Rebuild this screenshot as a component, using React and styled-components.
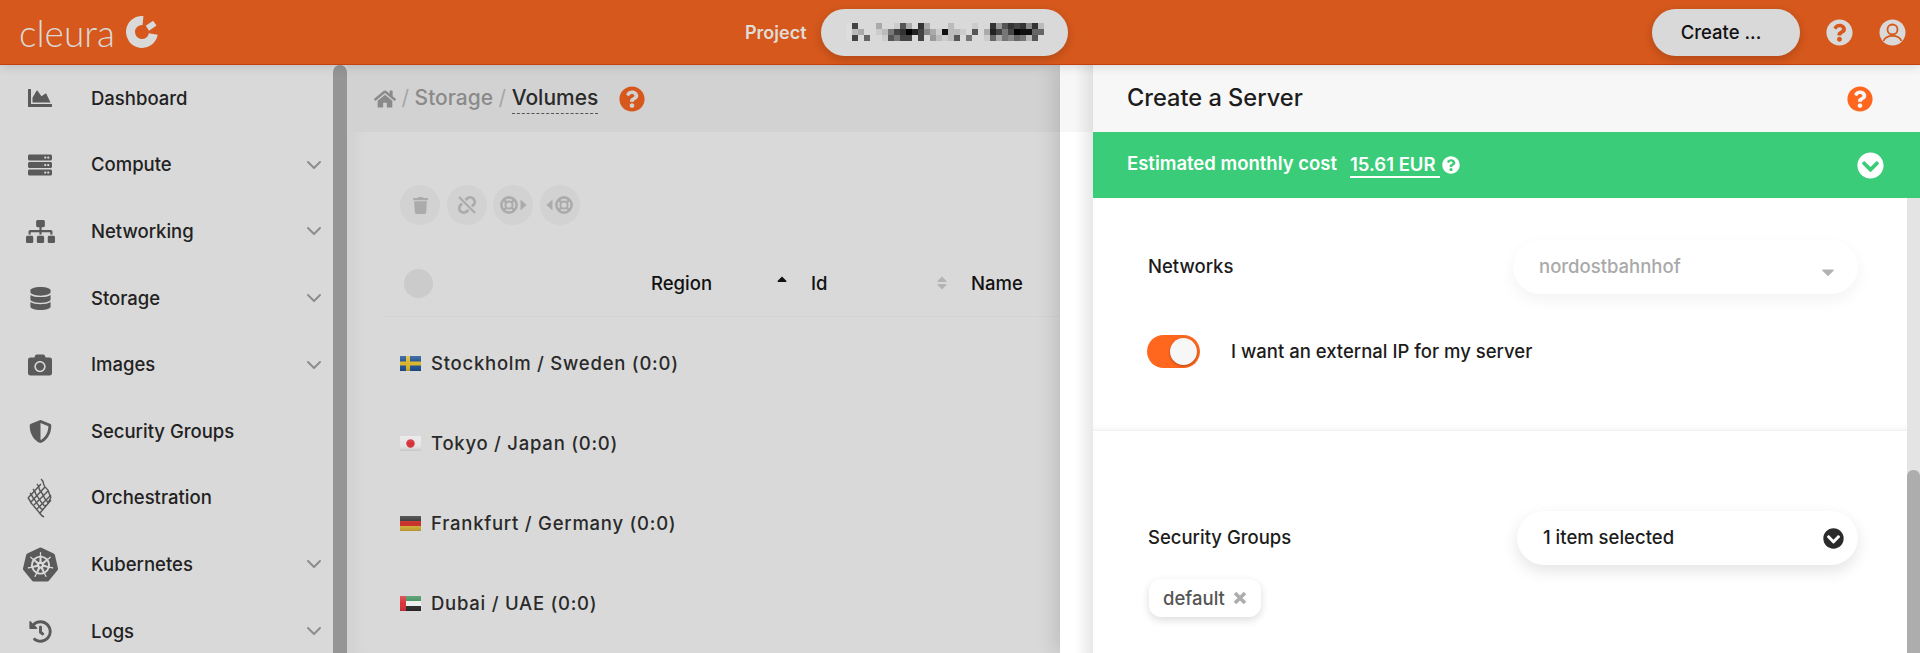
import React from "react";
import styled, {createGlobalStyle} from "styled-components";
import {
    FaChartArea, FaServer, FaSitemap, FaDatabase, FaCamera, FaShieldAlt, FaHistory, FaHome,
    FaTrash, FaQuestionCircle, FaChevronCircleDown,
    FaSortUp, FaSort, FaCaretDown,
} from "react-icons/fa";
import {SiKubernetes} from "react-icons/si";
import {FiChevronDown} from "react-icons/fi";

const GlobalStyle = createGlobalStyle`
    html, body {
        margin: 0;
        padding: 0;
        height: 100%;
        overflow: hidden;
        font-family: "Inter", "Liberation Sans", sans-serif;
    }
    * { box-sizing: border-box; }
`

// one hex digit per cell, "." is no cell
const mosaic = [
    "d4...a..c5a.3a...b...c..39534383b",
    "dba..cb7430248ac1bbc.5.a247401166",
    "d4.6..c5744.4.9bcb5.7..c6a7867b5.",
];

const Orchestration = () => (
    <svg width="26" height="40" viewBox="0 0 26 40" fill="none" stroke="#555" strokeWidth="1.4">
        <path d="M14 1c4 3 1 6 5 9s2 6 5 9" />
        <path d="M10 6c3 3 1 5 4 8s2 5 5 8 1 5 5 -3" />
        <path d="M6 11c3 3 2 5 4 7s3 5 5 7 2 4 4 2" />
        <path d="M3 15c3 3 2 4 4 6s3 5 5 7 2 4 4 3" />
        <path d="M1 20c3 3 2 4 4 6s4 5 6 7 2 4 6 6" />
        <path d="M1 20l13-14M4 24L18 9M7 27L21 13M10 31l14-14M13 35l11-13" />
    </svg>
);

const UserIcon = () => (
    <svg width="27" height="27" viewBox="0 0 27 27" fill="none">
        <circle cx="13.5" cy="13.5" r="13" fill="#d9d9d9" />
        <circle cx="13.5" cy="10.5" r="5" stroke="#d6581c" strokeWidth="1.8" />
        <path d="M4.5 22c1.5-4 4.5-5.2 9-5.2s7.500 1.200 9 5.200" stroke="#d6581c" strokeWidth="1.8" />
    </svg>
);

const Ring = () => (
    <>
        <circle cx="9" cy="9" r="7.6" fill="none" stroke="currentColor" strokeWidth="2.6" />
        <circle cx="9" cy="9" r="3.6" fill="none" stroke="currentColor" strokeWidth="2" />
        <path d="M3.800 3.800l2.600 2.600M14.200 3.800l-2.600 2.600M3.800 14.200l2.600-2.600M14.200 14.200l-2.600-2.600" stroke="currentColor" strokeWidth="2.400" />
    </>
);

const RingOut = () => (
    <svg width="27" height="18" viewBox="0 0 27 18">
        <Ring />
        <path d="M20.500 3.500L26.500 9l-6 5.500z" fill="currentColor" />
    </svg>
);

const RingIn = () => (
    <svg width="27" height="18" viewBox="0 0 27 18">
        <path d="M6.500 3.500L.5 9l6 5.500z" fill="currentColor" />
        <g transform="translate(9 0)"><Ring /></g>
    </svg>
);

const LinkOff = () => (
    <svg width="20" height="20" viewBox="0 0 20 20" fill="none" stroke="currentColor" strokeWidth="2.800">
        <rect x="1" y="5.500" width="18" height="9" rx="4.500" transform="rotate(-45 10 10)" />
        <path d="M2 2l16 16" stroke="#d2d2d2" strokeWidth="5" />
        <path d="M2 2l16 16" strokeWidth="2.200" />
    </svg>
);

const CloseIcon = () => (
    <svg width="14" height="14" viewBox="0 0 14 14" fill="none" stroke="currentColor" strokeWidth="3.600">
        <path d="M2 2l10 10M12 2L2 12" />
    </svg>
);

const Flag = ({country}) => (
    <FlagBox viewBox="0 0 21 15">
        <defs>
            <linearGradient id={"gloss-" + country} x1="0" y1="0" x2="0" y2="1">
                <stop offset="0" stopColor="#fff" stopOpacity=".2" />
                <stop offset=".5" stopColor="#fff" stopOpacity="0" />
                <stop offset="1" stopColor="#000" stopOpacity=".15" />
            </linearGradient>
        </defs>
        {country === "se" && <>
            <rect width="21" height="15" fill="#1c4f8f" />
            <rect x="6" width="4" height="15" fill="#d9b62d" />
            <rect y="5.500" width="21" height="4" fill="#d9b62d" />
        </>}
        {country === "jp" && <>
            <rect width="21" height="15" fill="#e6e6e6" />
            <circle cx="10.500" cy="7.500" r="4.200" fill="#d6303a" />
        </>}
        {country === "de" && <>
            <rect width="21" height="5" fill="#333" />
            <rect y="5" width="21" height="5" fill="#c8312a" />
            <rect y="10" width="21" height="5" fill="#d3ad35" />
        </>}
        {country === "ae" && <>
            <rect width="21" height="5" fill="#3f8f5a" />
            <rect y="5" width="21" height="5" fill="#eee" />
            <rect y="10" width="21" height="5" fill="#2a2a2a" />
            <rect width="6" height="15" fill="#d8303a" />
        </>}
        <rect width="21" height="15" fill={`url(#gloss-${country})`} />
    </FlagBox>
);

const navItems = [
    {label: "Dashboard", icon: <FaChartArea size={24} />},
    {label: "Compute", icon: <FaServer size={24} />, more: true},
    {label: "Networking", icon: <FaSitemap size={29} />, more: true},
    {label: "Storage", icon: <FaDatabase size={23} />, more: true},
    {label: "Images", icon: <FaCamera size={24} />, more: true},
    {label: "Security Groups", icon: <FaShieldAlt size={23} />},
    {label: "Orchestration", icon: <Orchestration />},
    {label: "Kubernetes", icon: <SiKubernetes size={35} />, more: true},
    {label: "Logs", icon: <FaHistory size={23} />, more: true},
];

const regions = [
    {country: "se", label: "Stockholm / Sweden (0:0)"},
    {country: "jp", label: "Tokyo / Japan (0:0)"},
    {country: "de", label: "Frankfurt / Germany (0:0)"},
    {country: "ae", label: "Dubai / UAE (0:0)"},
];

const App = () => (
    <Page>
        <GlobalStyle />
        <Header>
            <Logo>
                cleura
                <svg width="32" height="32" viewBox="0 0 32 32" fill="none" stroke="#d9d9d9" strokeWidth="9">
                    <path d="M17 4.500A11.500 11.500 0 1 0 27.300 18" />
                    <path d="M23.400 7.200L26.800 12.100" />
                </svg>
            </Logo>
            <ProjectArea>
                <ProjectLabel>Project</ProjectLabel>
                <ProjectPill>
                    <svg width="198" height="18" viewBox="0 0 198 18" shapeRendering="crispEdges">
                        {mosaic.map((row, y) => row.split("").map((c, x) => c !== "." && (
                            <rect key={x + "-" + y} x={x * 6} y={y * 6} width="6" height="6" fill={`#${c}${c}${c}`} />
                        )))}
                    </svg>
                </ProjectPill>
            </ProjectArea>
            <HeaderRight>
                <CreateButton>Create ...</CreateButton>
                <FaQuestionCircle size={27} />
                <UserIcon />
            </HeaderRight>
        </Header>
        <Body>
            <Sidebar>
                <Nav>
                    {navItems.map(item => (
                        <NavItem key={item.label}>
                            <NavIcon>{item.icon}</NavIcon>
                            <NavLabel>{item.label}</NavLabel>
                            {item.more && <NavChevron><FiChevronDown size={24} /></NavChevron>}
                        </NavItem>
                    ))}
                </Nav>
                <SideThumb />
            </Sidebar>
            <Main>
                <Breadcrumb>
                    <FaHome size={22} />
                    <Slash>/</Slash>
                    <Crumb>Storage</Crumb>
                    <Slash>/</Slash>
                    <Current>Volumes</Current>
                    <BreadHelp><FaQuestionCircle size={26} /></BreadHelp>
                </Breadcrumb>
                <Content>
                    <Actions>
                        <ActionButton><FaTrash size={17} /></ActionButton>
                        <ActionButton><LinkOff /></ActionButton>
                        <ActionButton><RingOut /></ActionButton>
                        <ActionButton><RingIn /></ActionButton>
                    </Actions>
                    <TableHead>
                        <HeadCheck />
                        <HeadCell>Region<SortIcon $active><FaSortUp size={16} /></SortIcon></HeadCell>
                        <HeadCell>Id<SortIcon><FaSort size={16} /></SortIcon></HeadCell>
                        <HeadCell>Name</HeadCell>
                    </TableHead>
                    <Rows>
                        {regions.map(region => (
                            <Row key={region.country}>
                                <Flag country={region.country} />
                                {region.label}
                            </Row>
                        ))}
                    </Rows>
                </Content>
            </Main>
            <Drawer>
                <DrawerEdge />
                <Panel>
                    <TitleBar>
                        <Title>Create a Server</Title>
                        <FaQuestionCircle size={26} />
                    </TitleBar>
                    <CostBar>
                        <CostLabel>Estimated monthly cost</CostLabel>
                        <CostValue>15.61 EUR</CostValue>
                        <CostHelp><FaQuestionCircle size={18} /></CostHelp>
                        <CostToggle><FaChevronCircleDown size={27} /></CostToggle>
                    </CostBar>
                    <PanelBody>
                        <Form>
                            <NetworkSection>
                                <FieldRow>
                                    <FieldLabel>Networks</FieldLabel>
                                    <Select $width="345px" $disabled>
                                        <SelectText>nordostbahnhof</SelectText>
                                        <SelectCaret><FaCaretDown size={20} /></SelectCaret>
                                    </Select>
                                </FieldRow>
                                <ToggleRow>
                                    <Toggle><Knob /></Toggle>
                                    <FieldLabel>I want an external IP for my server</FieldLabel>
                                </ToggleRow>
                            </NetworkSection>
                            <GroupSection>
                                <FieldRow>
                                    <FieldLabel>Security Groups</FieldLabel>
                                    <Select $width="341px">
                                        <SelectText>1 item selected</SelectText>
                                        <SelectIcon><FaChevronCircleDown size={21} /></SelectIcon>
                                    </Select>
                                </FieldRow>
                                <Chip>default<ChipClose><CloseIcon /></ChipClose></Chip>
                            </GroupSection>
                        </Form>
                        <PanelTrack><PanelThumb /></PanelTrack>
                    </PanelBody>
                </Panel>
            </Drawer>
        </Body>
    </Page>
);

const Page = styled.div`
    width: 1920px;
    height: 653px;
    display: flex;
    flex-direction: column;
    overflow: hidden;
    background: #d9d9d9;
    color: #1c1c1c;
    font-weight: 500;
    font-size: 18.5px;
`
const Header = styled.header`
    flex: 0 0 65px;
    display: flex;
    align-items: center;
    position: relative;
    z-index: 3;
    background: #d6581c;
    border-bottom: 1px solid #c8400f;
    box-shadow: 0 2px 10px rgba(0,0,0,.12);
`
const Logo = styled.div`
    width: 745px;
    padding-left: 19px;
    display: flex;
    align-items: center;
    gap: 11px;
    color: #d9d9d9;
    font-family: "Lato", sans-serif;
    font-weight: 300;
    font-size: 37px;
    letter-spacing: 0;
`
const ProjectArea = styled.div`
    display: flex;
    align-items: center;
    gap: 14px;
`
const ProjectLabel = styled.span`
    color: #e0dcd8;
    font-size: 18px;
    font-weight: 600;
`
const ProjectPill = styled.div`
    width: 247px;
    height: 47px;
    padding-left: 25px;
    display: flex;
    align-items: center;
    border-radius: 24px;
    background: #d9d9d9;
    box-shadow: 0 3px 10px rgba(0,0,0,.18);
`
const HeaderRight = styled.div`
    margin-left: auto;
    padding-right: 14px;
    display: flex;
    align-items: center;
    gap: 26px;
    color: #d9d9d9;
`
const CreateButton = styled.div`
    width: 148px;
    height: 47px;
    padding-right: 10px;
    display: flex;
    align-items: center;
    justify-content: center;
    border-radius: 24px;
    background: #d9d9d9;
    color: #111;
    box-shadow: 0 3px 10px rgba(0,0,0,.18);
`
const Body = styled.div`
    flex: 1;
    display: flex;
    min-height: 0;
`
const Sidebar = styled.aside`
    flex: 0 0 347px;
    display: flex;
    background: #d9d9d9;
`
const Nav = styled.nav`
    flex: 1;
    padding-right: 13px;
`
const NavItem = styled.div`
    height: 66.6px;
    display: flex;
    align-items: center;
`
const NavIcon = styled.span`
    flex: 0 0 80px;
    margin-right: 11px;
    display: flex;
    justify-content: center;
    color: #5a5a5a;
`
const NavLabel = styled.span`
    flex: 1;
    padding-bottom: 1px;
    color: #222;
`
const NavChevron = styled.span`
    margin-right: -6px;
    display: flex;
    color: #8d8d8d;
`
const SideThumb = styled.div`
    flex: 0 0 14px;
    border-radius: 7px 7px 0 0;
    background: #959595;
`
const Main = styled.main`
    flex: 0 0 713px;
    display: flex;
    flex-direction: column;
    box-shadow: inset 25px 0 20px -20px rgba(0,0,0,.05);
`
const Breadcrumb = styled.div`
    flex: 0 0 67px;
    padding-left: 27px;
    display: flex;
    align-items: center;
    background: #d2d2d2;
    color: #8a8a8a;
    font-size: 21px;
`
const Slash = styled.span`
    margin: 0 5.5px 2px;
    font-weight: 400;
    color: #a6a6a6;
`
const Crumb = styled.span`
    margin-bottom: 2px;
`
const Current = styled.span`
    padding-bottom: 3px;
    margin-top: 2px;
    border-bottom: 1px dashed #555;
    color: #2a2a2a;
`
const BreadHelp = styled.span`
    margin-left: 21px;
    display: flex;
    color: #d6581c;
`
const Content = styled.div`
    flex: 1;
    padding: 53px 0 0 53px;
`
const Actions = styled.div`
    display: flex;
    gap: 6.67px;
`
const ActionButton = styled.div`
    width: 40px;
    height: 40px;
    display: flex;
    align-items: center;
    justify-content: center;
    border-radius: 50%;
    background: #d2d2d2;
    color: #ababab;
`
const TableHead = styled.div`
    height: 67px;
    margin: 25px 0 0 -16px;
    padding-left: 20px;
    display: grid;
    grid-template-columns: 247px 160px 160px auto;
    align-items: center;
    border-bottom: 1px solid #d4d4d4;
    color: #111;
`
const HeadCheck = styled.div`
    width: 29px;
    height: 29px;
    border-radius: 50%;
    background: #cbcbcb;
`
const HeadCell = styled.div`
    padding-right: 21px;
    display: flex;
    align-items: center;
    justify-content: space-between;
`
const SortIcon = styled.span`
    display: flex;
    color: ${props => props.$active ? "#111" : "#b4b4b4"};
`
const Rows = styled.div`
    margin-top: 6px;
`
const Row = styled.div`
    height: 80px;
    display: flex;
    align-items: center;
    gap: 10px;
    letter-spacing: .75px;
    color: #2a2a2a;
`
const FlagBox = styled.svg`
    width: 21px;
    height: 15px;
    flex: none;
`
const Drawer = styled.div`
    flex: 1;
    display: flex;
    box-shadow: -6px 0 18px rgba(0,0,0,.12);
`
const DrawerEdge = styled.div`
    flex: 0 0 33px;
    background:
        linear-gradient(to right, rgba(0,0,0,0) 45%, rgba(0,0,0,.09)),
        linear-gradient(#f7f7f7 67px, #fff 67px);
`
const Panel = styled.section`
    flex: 1;
    display: flex;
    flex-direction: column;
    background: #fff;
`
const TitleBar = styled.div`
    flex: 0 0 67px;
    padding: 0 47px 0 34px;
    display: flex;
    align-items: center;
    justify-content: space-between;
    background: #f7f7f7;
    color: #ff671f;
`
const Title = styled.h2`
    margin: 0 0 3px;
    font-size: 23.6px;
    font-weight: 500;
    color: #1c1c1c;
`
const CostBar = styled.div`
    flex: 0 0 66px;
    padding: 0 36px 0 34px;
    display: flex;
    align-items: center;
    background: #3acc78;
    color: #fff;
    font-weight: 600;
`
const CostLabel = styled.span`
    margin-bottom: 5px;
`
const CostValue = styled.span`
    width: 90px;
    margin: 0 0 0 13px;
    padding-bottom: 1px;
    border-bottom: 2px solid #fff;
    white-space: nowrap;
`
const CostHelp = styled.span`
    margin-left: 2px;
    display: flex;
`
const CostToggle = styled.span`
    margin-left: auto;
    display: flex;
`
const PanelBody = styled.div`
    flex: 1;
    display: flex;
    min-height: 0;
`
const Form = styled.div`
    flex: 1;
    min-width: 0;
`
const NetworkSection = styled.div`
    height: 233px;
    padding: 42px 49px 0 55px;
    border-bottom: 1px solid #f1f1f1;
    background: linear-gradient(#fff 226px, #f8f8f8);
`
const GroupSection = styled.div`
    padding: 80px 49px 0 55px;
`
const FieldRow = styled.div`
    display: flex;
    align-items: center;
    justify-content: space-between;
`
const FieldLabel = styled.span`
    padding-bottom: 2px;
    color: #1c1c1c;
`
const Select = styled.div`
    width: ${props => props.$width};
    height: 54px;
    padding: 0 10px 0 26px;
    display: flex;
    align-items: center;
    justify-content: space-between;
    border-radius: 27px;
    background: #fff;
    color: ${props => props.$disabled ? "#a9a9a9" : "#1c1c1c"};
    box-shadow: 0 6px 16px rgba(0,0,0,${props => props.$disabled ? ".05" : ".11"});
`
const SelectText = styled.span`
    padding-bottom: 2px;
`
const SelectCaret = styled.span`
    margin: 10px 10px 0 0;
    display: flex;
    color: #b2b2b2;
`
const SelectIcon = styled.span`
    margin-right: 4px;
    display: flex;
    color: #2b2b2b;
`
const ToggleRow = styled.div`
    margin: 41px 0 0 -1px;
    display: flex;
    align-items: center;
    gap: 31px;
`
const Toggle = styled.div`
    width: 53px;
    height: 33px;
    padding: 3px;
    display: flex;
    justify-content: flex-end;
    border-radius: 17px;
    background: #ff671f;
`
const Knob = styled.div`
    width: 27px;
    height: 27px;
    border-radius: 50%;
    background: #f7f7f7;
    box-shadow: 0 1px 3px rgba(0,0,0,.3);
`
const Chip = styled.div`
    width: 112px;
    height: 38px;
    margin: 14px 0 0 1px;
    padding: 0 14px 0 14px;
    display: flex;
    align-items: center;
    justify-content: space-between;
    border-radius: 12px;
    background: #fff;
    color: #555;
    box-shadow: 0 3px 8px rgba(0,0,0,.14);
`
const ChipClose = styled.span`
    display: flex;
    color: #adadad;
`
const PanelTrack = styled.div`
    flex: 0 0 13px;
    display: flex;
    flex-direction: column;
    background: #e4e4e4;
`
const PanelThumb = styled.div`
    flex: 1;
    margin-top: 272px;
    border-radius: 6px 6px 0 0;
    background: #adadad;
`

export default App;
